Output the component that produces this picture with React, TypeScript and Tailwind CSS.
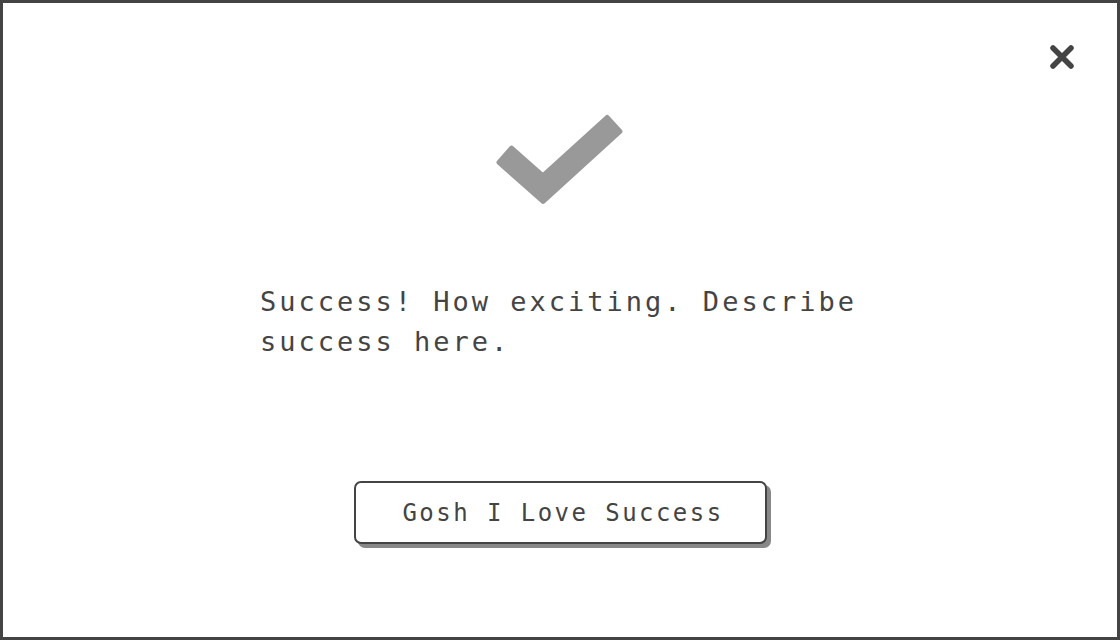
import React from "react";

const mono = { fontFamily: '"DejaVu Sans Mono", "Liberation Mono", monospace' };

function CheckMark() {
  return (
    <svg width="130" height="96" viewBox="495 112 130 96" aria-hidden="true">
      <polygon
        points="511.5,148.1 542.9,175.9 607.1,117.5 619.9,131.5 543.1,201.5 499.0,162.3"
        fill="#999999"
        stroke="#999999"
        strokeWidth="5"
        strokeLinejoin="round"
      />
    </svg>
  );
}

function CloseIcon() {
  return (
    <svg width="28" height="28" viewBox="0 0 28 28" aria-hidden="true">
      <path
        d="M5 5 L23 23 M23 5 L5 23"
        stroke="#444444"
        strokeWidth="5.5"
        strokeLinecap="round"
      />
    </svg>
  );
}

export default function App() {
  return (
    <div
      className="relative flex h-[640px] w-full flex-col items-center border-[3px] border-[#444] bg-white text-[#444]"
      style={mono}
    >
      <button
        type="button"
        aria-label="Close"
        className="absolute right-[41px] top-[40px] flex h-[28px] w-[28px] items-center justify-center"
      >
        <CloseIcon />
      </button>

      <div className="mt-[109px]">
        <CheckMark />
      </div>

      <p className="mt-[74px] w-[600px] text-[27px] leading-[40px] tracking-[3px]">
        Success! How exciting. Describe success here.
      </p>

      <button
        type="button"
        className="mt-[119px] flex h-[63px] w-[413px] items-center justify-center rounded-[7px] border-2 border-[#444] bg-white pl-[6px] text-[24px] tracking-[2.45px] text-[#444] shadow-[4px_4px_0_#888]"
      >
        Gosh I Love Success
      </button>
    </div>
  );
}
